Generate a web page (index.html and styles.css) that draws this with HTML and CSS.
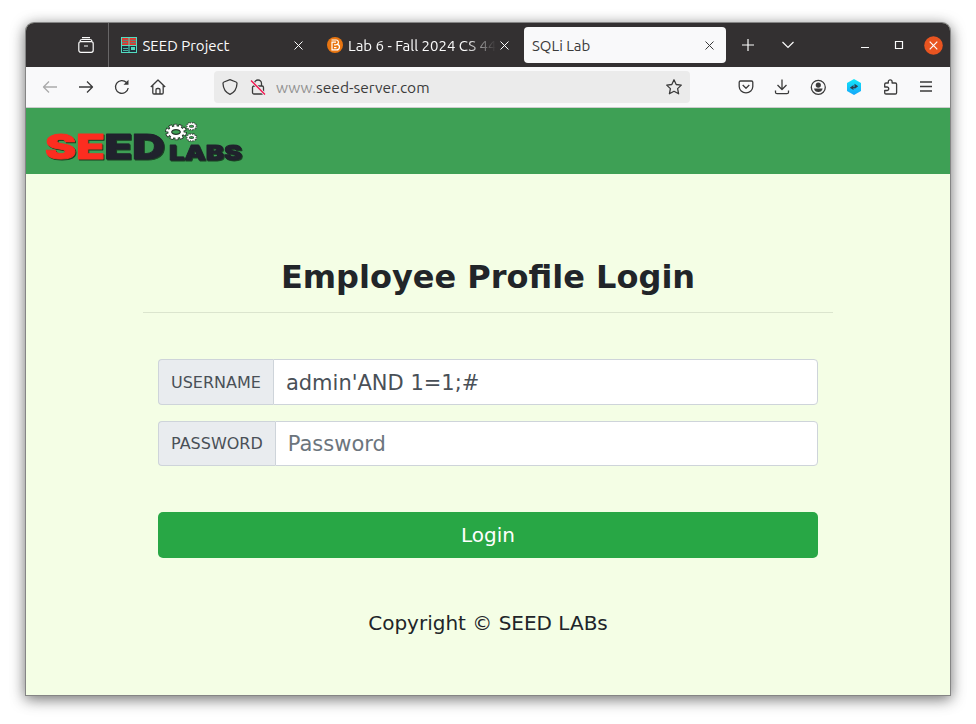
FILE: index.html
```html
<!DOCTYPE html>
<html lang="en">
<head>
<meta charset="utf-8">
<title>SQLi Lab</title>
<link rel="stylesheet" href="styles.css">
</head>
<body>
<div class="window">
  <header class="tabbar">
    <div class="view">
      <svg width="16" height="16" viewBox="0 0 16 16"><path d="M4 .7h8M2 4.200q.3-1.700 2-1.700h8q1.700 0 2 1.700"/><rect x=".8" y="4.700" width="14.400" height="10.600" rx="2"/><path d="M6 9h4"/></svg>
    </div>
    <div class="tab tab-first">
      <svg class="fav" width="16" height="16" viewBox="0 0 16 16"><path fill="#52dcc0" d="M0 0h16v16H0z"/><path fill="#e6352d" d="M1 1h6.500v7H1zM8.500 1H15v7H8.500z"/><path fill="#21303a" d="M1 9h6.500v6H1zM8.500 9H15v6H8.500z"/><path fill="#3b9c8c" d="M2 2.700h5.500v1H2zM1 5.300h5v1H1zM9.500 2.700H15v1H9.500zM9.500 5.300H15v1H9.500z"/><path fill="#52dcc0" d="M2 11h5v.8H2zM2 13.200h5v.8H2zM10 10h4v3h-4z"/></svg>
      <span class="label">SEED Project</span>
      <svg class="close" width="9" height="9" viewBox="0 0 9 9"><path d="M.5.5l8 8M8.500.5l-8 8"/></svg>
    </div>
    <div class="tab tab-second">
      <svg class="fav" width="16" height="16" viewBox="0 0 16 16"><circle cx="8" cy="8" r="8" fill="#e87511"/><path d="M4.500 3h4.800a2.300 2.300 0 0 1 1 4.300 2.800 2.800 0 0 1-1 5.500H5V5.200h4M7 7.800h2.500M7 10.600h2.500" fill="none" stroke="#fff"/></svg>
      <span class="label fade">Lab 6 - Fall 2024 CS 445</span>
      <svg class="close" width="9" height="9" viewBox="0 0 9 9"><path d="M.5.5l8 8M8.500.5l-8 8"/></svg>
    </div>
    <div class="tab tab-active">
      <span class="label">SQLi Lab</span>
      <svg class="close" width="9" height="9" viewBox="0 0 9 9"><path d="M.5.5l8 8M8.500.5l-8 8"/></svg>
    </div>
    <div class="controls">
      <svg width="12" height="12" viewBox="0 0 12 12"><path d="M6 0v12M0 6h12"/></svg>
      <svg width="12" height="8" viewBox="0 0 12 8"><path d="M.5 1L6 6.500 11.500 1"/></svg>
      <svg width="8" height="8" viewBox="0 0 8 8"><path d="M0 6.500h8"/></svg>
      <svg width="8" height="8" viewBox="0 0 8 8"><path d="M.5.5h7v7h-7z"/></svg>
      <svg width="19" height="19" viewBox="0 0 19 19"><circle cx="9.500" cy="9.500" r="9.300" fill="#e95420" stroke="none"/><path d="M5.700 5.700l7.600 7.600M13.300 5.700l-7.600 7.600"/></svg>
    </div>
  </header>
  <nav class="toolbar">
    <div class="nav">
      <svg class="dim" width="16" height="16" viewBox="0 0 16 16"><path d="M15 8H1.500M7 2.500L1.500 8 7 13.500"/></svg>
      <svg width="16" height="16" viewBox="0 0 16 16"><path d="M1 8h13.500M9 2.500L14.500 8 9 13.500"/></svg>
      <svg width="16" height="16" viewBox="0 0 16 16"><path d="M14.200 9A6.400 6.400 0 1 1 12.500 3.500"/><path d="M14.500.8v5h-5z" fill="#3b3b3b" stroke="none"/></svg>
      <svg width="16" height="16" viewBox="0 0 16 16"><path d="M.8 8L8 1l7.200 7M2.800 6.500v7.300q0 1.200 1.200 1.200h8q1.200 0 1.200-1.200V6.500M6 15v-4.200q0-1.300 1.300-1.300h1.400q1.300 0 1.300 1.300V15"/></svg>
    </div>
    <div class="url">
      <svg width="16" height="16" viewBox="0 0 16 16"><path d="M8 .7l6 2.300c.8.300 1 .8 1 1.500-.2 5-2 8.700-7 10.800C3 13.200 1.200 9.500 1 4.500 1 3.800 1.200 3.300 2 3z"/></svg>
      <svg width="16" height="16" viewBox="0 0 16 16"><path d="M4.500 7V4.500a3.500 3.500 0 0 1 7 0V7"/><rect x="2.500" y="7" width="11" height="8" rx="1.500"/><path d="M1 1.500l14 14" stroke="#ebebeb" stroke-width="3"/><path d="M1 1.500l14 14" stroke="#f5134f"/></svg>
      <span class="address"><span class="muted">www.</span>seed-server.com</span>
      <svg width="16" height="16" viewBox="0 0 16 16"><path d="M8 .8l2.200 4.700 5.100.6-3.700 3.500 1 5.200L8 12.300l-4.600 2.500 1-5.200L.7 6.100l5.100-.6z"/></svg>
    </div>
    <div class="actions">
      <svg width="16" height="16" viewBox="0 0 16 16"><path d="M2.500 2h11q1.300 0 1.300 1.300V7.500a6.800 6.300 0 0 1-13.600 0V3.300Q1.200 2 2.500 2zM4.700 6L8 9.200 11.300 6"/></svg>
      <svg width="16" height="16" viewBox="0 0 16 16"><path d="M8 .5v10M3.500 6L8 10.500 12.500 6M1.500 11.500v1.700q0 1.500 1.500 1.500h10q1.500 0 1.500-1.500v-1.700"/></svg>
      <svg width="16" height="16" viewBox="0 0 16 16"><circle cx="8.300" cy="8.300" r="7"/><path d="M4 9.500h8.600q-.7 3.600-4.300 3.600T4 9.500z" fill="#3b3b3b" stroke="none"/><circle cx="8.300" cy="6.100" r="2.600" fill="#3b3b3b" stroke="none"/></svg>
      <svg width="16" height="16" viewBox="0 0 16 16"><defs><linearGradient id="hex" x2="0" y2="1"><stop stop-color="#12e9f8"/><stop offset="1" stop-color="#15a5fa"/></linearGradient></defs><path d="M8 0l7 4v8l-7 4-7-4V4z" fill="url(#hex)" stroke="none"/><path d="M3.800 8.800L7.500 6v2h1v1h-1v2zM12.200 7.200L8.500 4.800v5.200z" fill="#2b3f50" stroke="none"/></svg>
      <svg width="16" height="16" viewBox="0 0 16 16"><path d="M5.800 4V2.700a1.900 1.900 0 0 1 3.800 0V4h3.200q1.300 0 1.300 1.300v8.500q0 1.200-1.300 1.200H3.500q-1.300 0-1.300-1.200v-2.300h2.300a1.700 1.700 0 0 0 0-3.500H2.200V5.300Q2.200 4 3.500 4z" transform="translate(.5)"/></svg>
      <svg width="16" height="16" viewBox="0 0 16 16"><path d="M2 3h12M2 7.500h12M2 12h12"/></svg>
    </div>
  </nav>
  <main class="page">
    <div class="brand">
      <svg width="204" height="44" viewBox="42 120 204 44" role="img" aria-label="SEED LABS">
        <g class="word">
          <text x="45" y="159" textLength="60" lengthAdjust="spacingAndGlyphs" class="big red">SE</text>
          <text x="104.500" y="159" textLength="60.500" lengthAdjust="spacingAndGlyphs" class="big">ED</text>
          <text x="169" y="159.500" textLength="73" lengthAdjust="spacingAndGlyphs" class="small">LABS</text>
        </g>
        <g class="gears">
          <g id="gear">
            <ellipse class="teeth-edge" cx="176" cy="132" rx="8.500" ry="5.800" pathLength="40"/>
            <ellipse class="ring-edge" cx="176" cy="132" rx="6.300" ry="4.300"/>
            <ellipse class="teeth" cx="176" cy="132" rx="8.500" ry="5.800" pathLength="40"/>
            <ellipse class="ring" cx="176" cy="132" rx="6.300" ry="4.300"/>
          </g>
          <use href="#gear" transform="translate(191.500 126.300) scale(.52) translate(-176 -132)"/>
          <use href="#gear" transform="translate(191.500 137.500) scale(.52) translate(-176 -132)"/>
        </g>
      </svg>
    </div>
    <div class="login">
      <h1>Employee Profile Login</h1>
      <form class="fields">
        <label class="group group-user"><span class="tag">USERNAME</span><input type="text" value="admin'AND 1=1;#"></label>
        <label class="group group-pass"><span class="tag">PASSWORD</span><input type="password" placeholder="Password"></label>
        <button type="button">Login</button>
      </form>
      <p>Copyright © SEED LABs</p>
    </div>
  </main>
</div>
</body>
</html>
```
FILE: styles.css
```css
* { box-sizing: border-box; }
body { margin: 0; height: 724px; padding: 23px 26px 29px; background: #fff; overflow: hidden; font-family: "DejaVu Sans", sans-serif; }
svg { display: block; flex: none; overflow: visible; }
.window { height: 672px; border-radius: 8px 8px 0 0; box-shadow: 0 0 0 1px #858585, 0 3px 14px 1px rgba(0,0,0,.5), 0 5px 20px rgba(0,0,0,.1); overflow: hidden; background: #f4fee5; }
.tabbar { height: 44px; display: flex; align-items: center; background: #333031; color: #fbfbfb; font: 15px Ubuntu, "Noto Sans", sans-serif; }
.tabbar svg { fill: none; stroke: currentColor; stroke-width: 1.2; }
.tabbar .fav { stroke: none; }
.tabbar .close { stroke-width: 1; }
.view { width: 83px; height: 44px; padding: 14px 14px 0 52px; border-right: 1px solid #686667; }
.tab { display: flex; align-items: center; height: 36px; }
.label { flex: 1; white-space: nowrap; overflow: hidden; }
.tab-first { width: 206px; padding: 0 12px 0 12px; gap: 5.500px; }
.tab-second { width: 205px; padding: 0 11px 0 12px; gap: 5px; }
.tab-active { width: 202px; margin-left: 4px; padding: 0 12px 0 8px; color: #3b3b3b; background: #f9f9fa; border-radius: 4px; }
.fade { margin-right: -4px; mask-image: linear-gradient(90deg, #000 78%, transparent 98%); }
.controls { flex: 1; display: flex; align-items: center; padding-left: 16px; }
.controls svg:nth-child(2) { margin-left: 28px; }
.controls svg:nth-child(3) { margin-left: 67px; }
.controls svg:nth-child(4) { margin-left: 26px; }
.controls svg:nth-child(5) { margin-left: 21px; }
.toolbar { height: 41px; display: flex; align-items: center; background: #f9f9fa; border-bottom: 1px solid #ccc; }
.toolbar svg { fill: none; stroke: #3b3b3b; stroke-width: 1.3; stroke-linejoin: round; }
.toolbar .dim { stroke: #aaa; }
.nav { width: 188px; display: flex; gap: 20px; padding-left: 16px; }
.url { width: 476px; height: 32px; display: flex; align-items: center; padding: 0 8px; gap: 12px; border-radius: 4px; background: #ebebeb; }
.address { flex: 1; font: 15.500px Ubuntu, "Noto Sans", sans-serif; color: #3b3b3b; margin-left: -2px; }
.muted { color: #929292; }
.actions { display: flex; gap: 20px; padding-left: 48px; }
.page { height: 587px; background: #f4fee5; color: #212529; }
.brand { height: 66px; padding: 12px 16px; background: #3ea055; }
.word { filter: drop-shadow(1px 1px .5px rgba(0,0,0,.6)); font-family: Inter, sans-serif; font-weight: 900; fill: #20222d; stroke: #20222d; stroke-width: .8; stroke-linejoin: round; }
.big { font-size: 33.500px; }
.red { fill: #fc2d20; stroke: #fc2d20; }
.small { font-size: 20px; }
.gears { fill: none; }
.teeth-edge { stroke: #26352b; stroke-width: 5; stroke-dasharray: 3 1; }
.ring-edge { stroke: #26352b; stroke-width: 5; }
.teeth { stroke: #fff; stroke-width: 3.200; stroke-dasharray: 2 2; stroke-dashoffset: -.5; }
.ring { stroke: #fff; stroke-width: 2.800; }
.login { width: 690px; margin: 0 auto; text-align: center; }
h1 { margin: 0; height: 139px; padding-top: 84px; border-bottom: 1px solid #dbe5ce; font-size: 32px; line-height: 38px; }
.fields { display: flex; flex-direction: column; margin: 46px 15px 0; }
.group { display: flex; height: 46px; margin-bottom: 16px; }
.group-pass { height: 45px; margin-bottom: 46px; }
.tag { display: flex; align-items: center; padding: 0 12px; border: 1px solid #ced4da; border-right: 0; border-radius: 4px 0 0 4px; background: #e9ecef; color: #495057; font-size: 16px; }
input { flex: 1; min-width: 0; padding: 0 12px; border: 1px solid #ced4da; border-radius: 0 4px 4px 0; background: #fff; color: #495057; font: 21px "DejaVu Sans", sans-serif; }
.group-user input { padding-top: 2px; }
input::placeholder { color: #6c757d; opacity: 1; }
button { height: 46px; border: 0; border-radius: 5px; background: #28a745; color: #fff; font: 20px "DejaVu Sans", sans-serif; }
p { margin: 50px 0 0; font-size: 20px; line-height: 30px; }
```
